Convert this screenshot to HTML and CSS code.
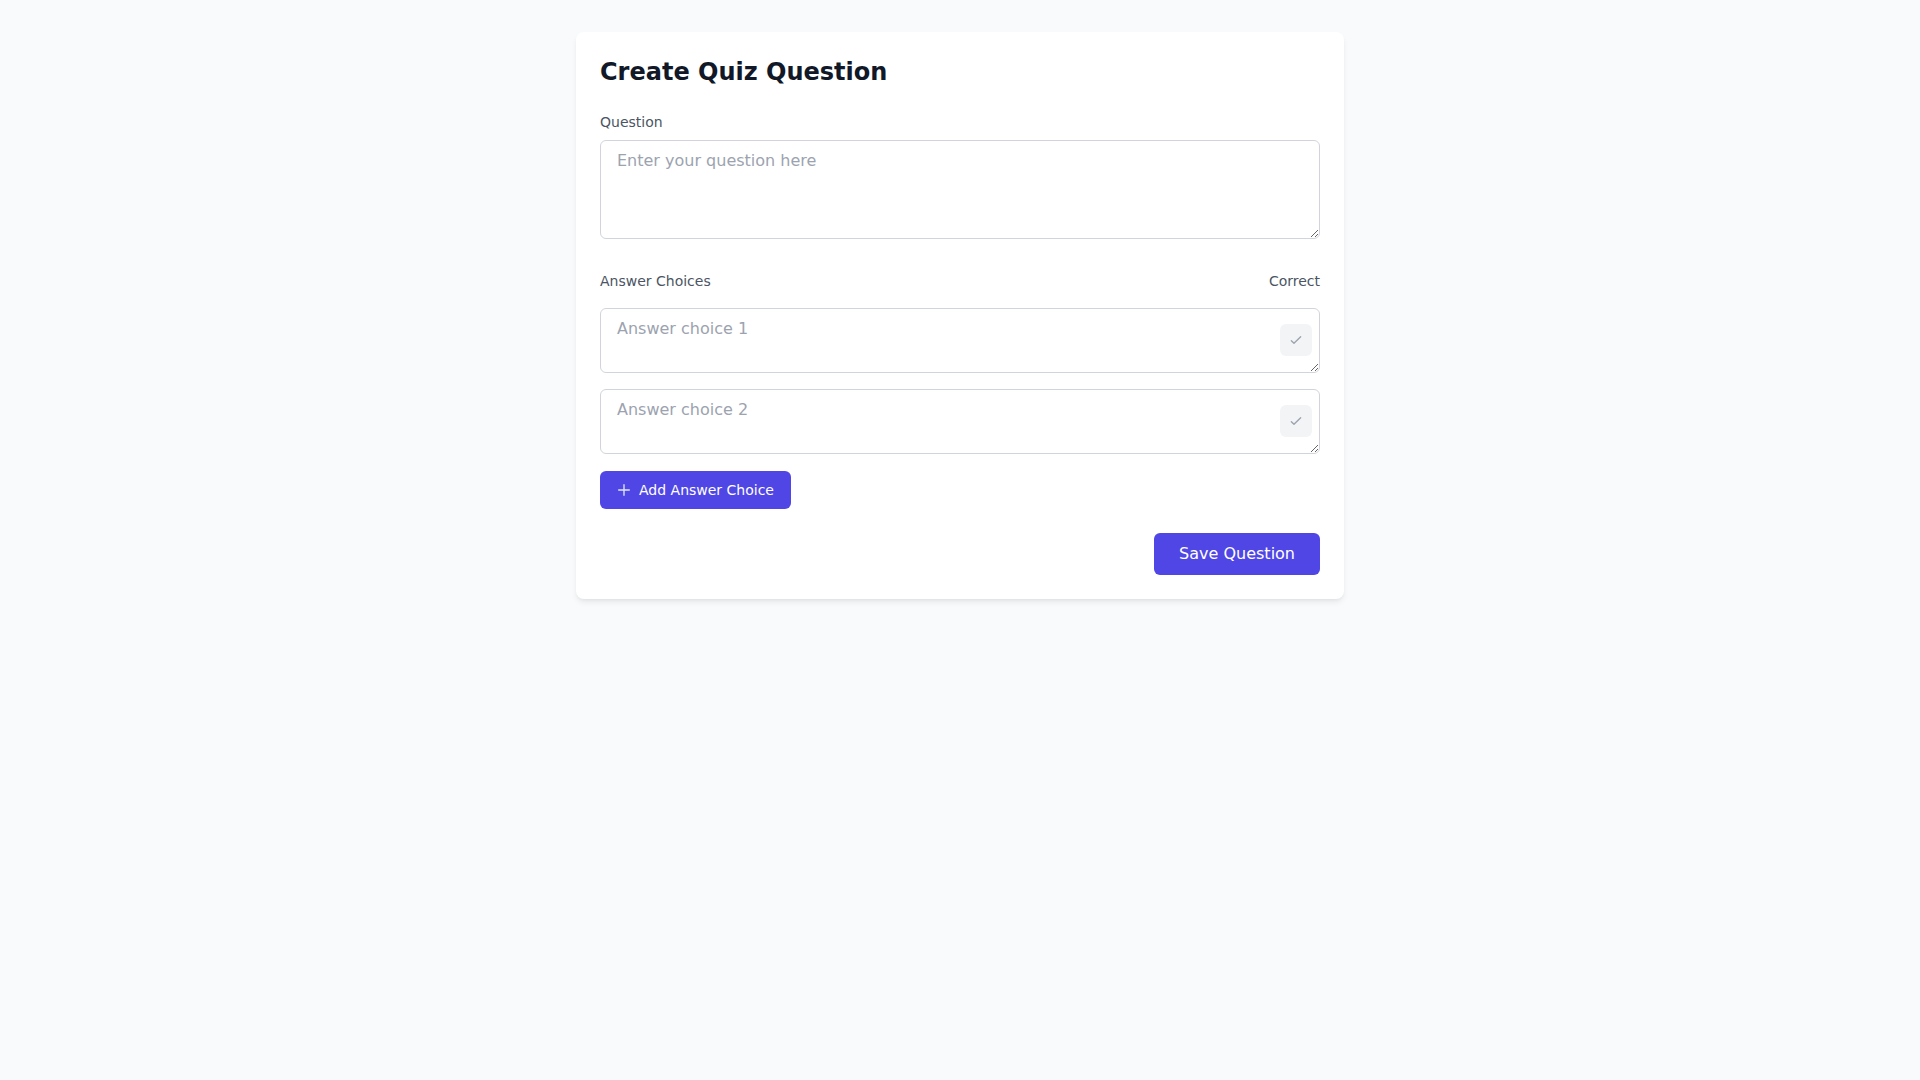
FILE: index.html
```html
<!DOCTYPE html>
<html lang="en">
<head>
<meta charset="utf-8">
<title>Create Quiz Question</title>
<link rel="stylesheet" href="styles.css">
</head>
<body>
<main class="page">
  <section class="card">
    <h1 class="title">Create Quiz Question</h1>

    <div class="field">
      <label class="label" for="q">Question</label>
      <textarea id="q" class="input input-question" placeholder="Enter your question here"></textarea>
    </div>

    <div class="answers">
      <div class="answers-head">
        <span class="label">Answer Choices</span>
        <span class="label">Correct</span>
      </div>
      <div class="choice-list">
        <div class="choice">
          <textarea class="input input-answer" placeholder="Answer choice 1"></textarea>
          <button class="check" type="button" aria-label="Mark correct">
            <svg viewBox="0 0 24 24" width="16" height="16" fill="none" stroke="currentColor" stroke-width="2" stroke-linecap="round" stroke-linejoin="round"><path d="M5 13l4 4L19 7"/></svg>
          </button>
        </div>
        <div class="choice">
          <textarea class="input input-answer" placeholder="Answer choice 2"></textarea>
          <button class="check" type="button" aria-label="Mark correct">
            <svg viewBox="0 0 24 24" width="16" height="16" fill="none" stroke="currentColor" stroke-width="2" stroke-linecap="round" stroke-linejoin="round"><path d="M5 13l4 4L19 7"/></svg>
          </button>
        </div>
      </div>
      <button class="btn-add" type="button">
        <svg viewBox="0 0 24 24" width="16" height="16" fill="none" stroke="currentColor" stroke-width="2" stroke-linecap="round"><path d="M12 4v16M20 12H4"/></svg>
        <span>Add Answer Choice</span>
      </button>
    </div>

    <div class="actions">
      <button class="btn-save" type="button">Save Question</button>
    </div>
  </section>
</main>
</body>
</html>
```

FILE: styles.css
```css
* { box-sizing: border-box; }

html, body {
  margin: 0;
  padding: 0;
}

body {
  background: #f9fafb;
  font-family: "DejaVu Sans", "Noto Sans", sans-serif;
  color: #111827;
  line-height: 1.5;
}

.page {
  padding: 32px 0;
  display: flex;
  justify-content: center;
}

.card {
  width: 768px;
  background: #ffffff;
  border-radius: 8px;
  box-shadow: 0 4px 6px -1px rgba(0,0,0,0.08), 0 2px 4px -2px rgba(0,0,0,0.06);
  padding: 24px;
  display: flex;
  flex-direction: column;
}

.title {
  margin: 0 0 24px 0;
  font-size: 24px;
  line-height: 32px;
  font-weight: 700;
  color: #111827;
}

.field {
  display: flex;
  flex-direction: column;
}

.label {
  display: block;
  font-size: 14px;
  line-height: 20px;
  color: #4b5563;
}

.field .label {
  margin-bottom: 8px;
}

.input {
  display: block;
  width: 100%;
  font-family: inherit;
  font-size: 16px;
  line-height: 24px;
  color: #111827;
  background: #ffffff;
  border: 1px solid #d1d5db;
  border-radius: 6px;
  padding: 8px 16px;
  margin: 0;
  outline: none;
}

.input::placeholder {
  color: #9ca3af;
}

.input-question {
  height: 99px;
}

.input-answer {
  height: 65px;
  padding-right: 48px;
}

.answers {
  margin-top: 32px;
  display: flex;
  flex-direction: column;
  align-items: flex-start;
}

.answers-head {
  width: 100%;
  display: flex;
  justify-content: space-between;
  margin-bottom: 17px;
}

.choice-list {
  width: 100%;
  display: flex;
  flex-direction: column;
  gap: 16px;
}

.choice {
  position: relative;
}

.check {
  position: absolute;
  right: 8px;
  top: 16px;
  width: 32px;
  height: 32px;
  border: none;
  border-radius: 6px;
  background: #f3f4f6;
  color: #9ca3af;
  display: flex;
  align-items: center;
  justify-content: center;
  padding: 0;
  cursor: pointer;
}

.btn-add {
  margin-top: 17px;
  height: 38px;
  display: inline-flex;
  align-items: center;
  gap: 7px;
  padding: 0 17px 0 16px;
  border: none;
  border-radius: 6px;
  background: #4f46e5;
  color: #ffffff;
  font-family: inherit;
  font-size: 14px;
  line-height: 20px;
  cursor: pointer;
}

.btn-add svg {
  color: #e0e7ff;
}

.actions {
  margin-top: 24px;
  display: flex;
  justify-content: flex-end;
}

.btn-save {
  height: 42px;
  padding: 0 25px;
  border: none;
  border-radius: 6px;
  background: #4f46e5;
  color: #ffffff;
  font-family: inherit;
  font-size: 16px;
  line-height: 24px;
  cursor: pointer;
}
```
